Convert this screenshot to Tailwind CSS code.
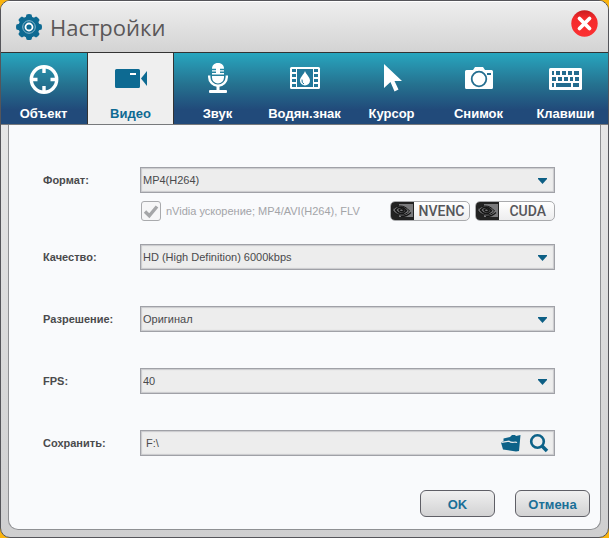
<!DOCTYPE html>
<html lang="ru">
<head>
    <meta charset="UTF-8">
    <meta name="viewport" content="width=device-width, initial-scale=1.0">
    <title>Настройки</title>
    <script src="https://cdn.jsdelivr.net/npm/@tailwindcss/browser@4"></script>
</head>
<body class="bg-[#fbb40c] font-['Liberation_Sans',sans-serif]">
    <div class="flex min-h-screen flex-col overflow-hidden rounded-[10px] border border-[#55555a] bg-linear-to-b from-[#ededed] to-[#cfcfd0]">
        <!-- Header -->
        <header class="flex h-[51px] items-center bg-linear-to-b from-[#efefef] to-[#d3d3d3] pr-[10px] pl-[15px] shadow-[inset_0_1px_0_#fff]">
            <svg class="size-[26px]" viewBox="0 0 26 26">
                <g fill="#0d6a92">
                    <circle cx="13" cy="13" r="10.500"/>
                    <path id="teeth" d="M9.500 4l1-3.500q2.500-1 5 0l1 3.500v18l-1 3.500q-2.500 1-5 0l-1-3.500z"/>
                    <use href="#teeth" transform="rotate(45 13 13)"/>
                    <use href="#teeth" transform="rotate(90 13 13)"/>
                    <use href="#teeth" transform="rotate(135 13 13)"/>
                </g>
                <circle cx="13" cy="13" r="6.300" fill="none" stroke="#8dbbd0" stroke-width="1"/>
                <circle cx="13" cy="13" r="3.500" fill="none" stroke="#fff" stroke-width="1.800"/>
            </svg>
            <h1 class="ml-2 flex-1 font-['Open_Sans',sans-serif] text-[22px] leading-7 text-[#5a5758]">Настройки</h1>
            <button type="button" aria-label="Закрыть" class="mb-[7px] size-[27px]">
                <svg viewBox="0 0 27 27">
                    <defs>
                        <linearGradient id="red" x1="0" y1="0" x2="0" y2="1">
                            <stop offset="0" stop-color="#c81d20"/>
                            <stop offset=".3" stop-color="#f42a2c"/>
                            <stop offset="1" stop-color="#fb3032"/>
                        </linearGradient>
                    </defs>
                    <circle cx="13.5" cy="13.5" r="13.2" fill="url(#red)"/>
                    <path d="M8.500 8.500l10 10M18.500 8.500l-10 10" stroke="#fff" stroke-width="3.800" stroke-linecap="round"/>
                </svg>
            </button>
        </header>

        <!-- Tabs -->
        <nav class="-mx-px grid h-[73px] grid-cols-7 border-t border-b border-t-[#333] border-b-[#77797c] bg-linear-to-b from-[#27a6bf] via-[#25718f] via-45% to-[#214a7a] to-80% text-[13px] leading-4 font-bold text-white">
            <button type="button" class="flex flex-col items-center justify-between pt-2.5 pb-[2px]">
                <svg class="size-8" viewBox="0 0 32 32">
                    <circle cx="16" cy="16.500" r="12.700" fill="none" stroke="#fff" stroke-width="3.400"/>
                    <path d="M16 3v7M16 23v7M2.500 16.500h7M22.500 16.500h7" stroke="#fff" stroke-width="3.400"/>
                </svg>
                Объект
            </button>
            <button type="button" aria-current="page" class="flex flex-col items-center justify-between border-x border-[#333] bg-[#efefef] pt-2.5 pb-[2px] text-[#0e6a93]">
                <svg class="size-8" viewBox="0 0 32 32" fill="#0d6a92">
                    <path d="M1.500 6h22a1.500 1.500 0 0 1 1.500 1.500v16a1.500 1.500 0 0 1-1.500 1.500h-22A1.500 1.500 0 0 1 0 23.500v-16A1.500 1.500 0 0 1 1.500 6z"/>
                    <path d="M26 15.500L32 8v15z"/>
                    <path d="M15 10h6v2h-6z" fill="#fff"/>
                </svg>
                Видео
            </button>
            <button type="button" class="flex flex-col items-center justify-between pt-2.5 pb-[2px]">
                <svg class="size-8" viewBox="0 0 32 32" fill="#fff">
                    <path d="M16 0c-4 0-6 2.500-6 5.800h4v1.400h-4v1.400h4V10h-4v1.400h12V10h-4V8.600h4V7.200h-4V5.800h4C22 2.500 20 0 16 0zM10 13h12v1.500a6 6 0 0 1-12 0z"/>
                    <path d="M7.200 12.500V14a8.800 8.800 0 0 0 17.600 0v-1.500" fill="none" stroke="#fff" stroke-width="2.400"/>
                    <path d="M14.500 23h3v4h-3z"/>
                    <rect x="7" y="27" width="18" height="3" rx="1"/>
                </svg>
                Звук
            </button>
            <button type="button" class="flex flex-col items-center justify-between pt-2.5 pb-[2px]">
                <svg class="size-8" viewBox="0 0 32 32">
                    <rect x="1" y="4" width="30" height="22" rx="1.500" fill="#fff"/>
                    <g fill="#23789a">
                        <path d="M8 6h16v18H8z"/>
                        <path d="M3 6h4v3H3zM3 11h4v3H3zM3 16h4v3H3zM3 21h4v3H3zM25 6h4v3h-4zM25 11h4v3h-4zM25 16h4v3h-4zM25 21h4v3h-4z"/>
                    </g>
                    <path d="M16 8c1 3.500 5 6 5 9.500a5 5 0 0 1-10 0C11 14 15 11.500 16 8z" fill="#fff"/>
                    <path d="M13 16.500q-.5 3.500 2 4.500" fill="none" stroke="#23789a"/>
                </svg>
                Водян.знак
            </button>
            <button type="button" class="flex flex-col items-center justify-between pt-2.5 pb-[2px]">
                <svg class="size-8" viewBox="0 0 32 32" fill="#fff">
                    <path d="M8 1l18 17h-7.500l4 8.500-4 2-4-9.500L8 25z"/>
                </svg>
                Курсор
            </button>
            <button type="button" class="flex flex-col items-center justify-between pt-2.5 pb-[2px]">
                <svg class="size-8" viewBox="0 0 32 32">
                    <path d="M3.500 7H10l2-3h8l2 3h6.500A1.500 1.500 0 0 1 30 8.500v16a1.500 1.500 0 0 1-1.500 1.500h-25A1.500 1.500 0 0 1 2 24.500v-16A1.500 1.500 0 0 1 3.500 7z" fill="#fff"/>
                    <circle cx="16" cy="16" r="7.300" fill="none" stroke="#256f91" stroke-width="1.800"/>
                    <path d="M24 10h4v2h-4z" fill="#256f91"/>
                </svg>
                Снимок
            </button>
            <button type="button" class="flex flex-col items-center justify-between pt-2.5 pb-[2px]">
                <svg class="h-8 w-[33px]" viewBox="0 0 33 32">
                    <rect x="0" y="5" width="33" height="22" rx="1.500" fill="#fff"/>
                    <path fill="#236c8f" d="M3 8h2v4H3zM7 8h4v4H7zM13 8h4v4h-4zM19 8h4v4h-4zM25 8h5v4h-5zM3 14h4v4H3zM9 14h4v4H9zM15 14h4v4h-4zM21 14h3v4h-3zM26 14h4v4h-4zM3 20h2v4H3zM7 20h15v4H7zM24 20h6v4h-6z"/>
                </svg>
                Клавиши
            </button>
        </nav>

        <!-- Settings form -->
        <form class="mx-[7px] mb-[7px] flex flex-1 flex-col rounded-b-[10px] border border-t-0 border-[#8f9093] bg-[#f9fafc] text-[11px] text-[#4a4a4c]">
            <div class="pt-[42px] pr-[45px] pl-[34px]">
                <div class="flex items-center">
                    <label for="format" class="w-[97px] font-bold">Формат:</label>
                    <div class="relative flex-1">
                        <select id="format" class="block h-[26px] w-full appearance-none border border-[#a0a1a7] bg-[#ededed] pl-0.5 shadow-[inset_0_0_1px_1px_#c9c9cc]">
                            <option>MP4(H264)</option>
                        </select>
                        <svg class="pointer-events-none absolute top-[11px] right-2 h-[6px] w-[9px]" viewBox="0 0 9 6"><path d="M0 0h9v1L4.500 6 0 1z" fill="#0d5f85"/></svg>
                    </div>
                </div>

                <div class="mt-2 mb-[23px] ml-[97px] flex items-center text-[#a3a4a8]">
                    <label class="flex flex-1 items-center gap-[5px] pl-px">
                        <span class="grid size-5">
                            <input type="checkbox" checked disabled class="col-start-1 row-start-1 appearance-none rounded-[3px] border border-[#a9aaad] bg-[#f6f6f7]">
                            <svg class="pointer-events-none col-start-1 row-start-1" viewBox="0 0 20 20"><path d="M4 10.500l4.300 4.300L16 5.500" fill="none" stroke="#a5a6a8" stroke-width="3.400"/></svg>
                        </span>
                        nVidia ускорение; MP4/AVI(H264), FLV
                    </label>
                    <div class="flex gap-[5px] font-['Roboto',sans-serif] text-sm leading-[18px] font-medium text-[#56565a]">
                        <span class="flex h-5 w-20 overflow-hidden rounded-[5px] border border-[#a9aaad] bg-linear-to-b from-white to-[#ededee]">
                            <svg class="w-[23px] bg-[#222]" viewBox="0 0 23 18">
                                <path id="eyeback" d="M8 2h14v13H8z" fill="#7a7a7c"/>
                                <g id="eye" fill="none">
                                    <path d="M1.500 8C5 3 13 2 18.500 9 14 14.500 5.500 14.500 1.500 8z" fill="#7a7a7c" stroke="#161616"/>
                                    <path d="M4.500 8c3-4 8-3.500 11 .8-3.500 4-8 3.700-11-.8z" stroke="#161616" stroke-width="1.500"/>
                                    <path d="M8 8c1.500-2 4-1.500 5 .6-1.500 1.800-4 1.700-5-.6z" stroke="#161616" stroke-width="1.500"/>
                                    <path d="M10 14.500c4.500 0 7.500-1.500 10-4" stroke="#161616" stroke-width="1.200"/>
                                </g>
                            </svg>
                            <span class="flex-1 text-center">NVENC</span>
                        </span>
                        <span class="flex h-5 w-20 overflow-hidden rounded-[5px] border border-[#a9aaad] bg-linear-to-b from-white to-[#ededee]">
                            <svg class="w-[23px] bg-[#222]" viewBox="0 0 23 18">
                                <use href="#eyeback"/>
                                <use href="#eye"/>
                            </svg>
                            <span class="flex-1 pr-2 text-right">CUDA</span>
                        </span>
                    </div>
                </div>

                <div class="mb-9 flex items-center">
                    <label for="quality" class="w-[97px] font-bold">Качество:</label>
                    <div class="relative flex-1">
                        <select id="quality" class="block h-[26px] w-full appearance-none border border-[#a0a1a7] bg-[#ededed] pl-0.5 shadow-[inset_0_0_1px_1px_#c9c9cc]">
                            <option>HD (High Definition) 6000kbps</option>
                        </select>
                        <svg class="pointer-events-none absolute top-[11px] right-2 h-[6px] w-[9px]" viewBox="0 0 9 6"><path d="M0 0h9v1L4.500 6 0 1z" fill="#0d5f85"/></svg>
                    </div>
                </div>

                <div class="mb-9 flex items-center">
                    <label for="resolution" class="w-[97px] font-bold">Разрешение:</label>
                    <div class="relative flex-1">
                        <select id="resolution" class="block h-[26px] w-full appearance-none border border-[#a0a1a7] bg-[#ededed] pl-0.5 shadow-[inset_0_0_1px_1px_#c9c9cc]">
                            <option>Оригинал</option>
                        </select>
                        <svg class="pointer-events-none absolute top-[11px] right-2 h-[6px] w-[9px]" viewBox="0 0 9 6"><path d="M0 0h9v1L4.500 6 0 1z" fill="#0d5f85"/></svg>
                    </div>
                </div>

                <div class="mb-9 flex items-center">
                    <label for="fps" class="w-[97px] font-bold">FPS:</label>
                    <div class="relative flex-1">
                        <select id="fps" class="block h-[26px] w-full appearance-none border border-[#a0a1a7] bg-[#ededed] pl-0.5 shadow-[inset_0_0_1px_1px_#c9c9cc]">
                            <option>40</option>
                        </select>
                        <svg class="pointer-events-none absolute top-[11px] right-2 h-[6px] w-[9px]" viewBox="0 0 9 6"><path d="M0 0h9v1L4.500 6 0 1z" fill="#0d5f85"/></svg>
                    </div>
                </div>

                <div class="flex items-center">
                    <label for="path" class="w-[97px] font-bold">Сохранить:</label>
                    <div class="flex h-[26px] flex-1 items-center border border-[#a0a1a7] bg-[#ededed] px-[5px] shadow-[inset_0_0_1px_1px_#c9c9cc]">
                        <input id="path" type="text" value="F:\" class="min-w-0 flex-1 outline-none">
                        <button type="button" aria-label="Открыть папку">
                            <svg class="h-[18px] w-5" viewBox="0 0 20 18" fill="#0d6288">
                                <path d="M2.500 7V4.500L9 3l2-2h3l1 1 4.500-1L18 17l-3 .5L2 15.500 0 8.500z"/>
                                <path d="M.5 8.300L8 7.200c3 2.500 6.500 0 8 1.500" fill="none" stroke="#ededed" stroke-width="1.200"/>
                            </svg>
                        </button>
                        <button type="button" aria-label="Найти" class="ml-2">
                            <svg class="size-5" viewBox="0 0 20 20" fill="none" stroke="#0d6288">
                                <circle cx="8.500" cy="8.500" r="6.300" stroke-width="2.600"/>
                                <path d="M13 13l5 5" stroke-width="3.600"/>
                            </svg>
                        </button>
                    </div>
                </div>
            </div>

            <div class="mt-auto flex justify-end gap-5 pr-[10px] pb-3 text-[13px] leading-4 font-bold text-[#1a6f97]">
                <button type="submit" class="h-[27px] w-[75px] rounded-[6px] border border-[#5f5f66] bg-linear-to-b from-[#f0f0f0] to-[#d2d2d3] pt-0.5">OK</button>
                <button type="button" class="h-[27px] w-[75px] rounded-[6px] border border-[#5f5f66] bg-linear-to-b from-[#f0f0f0] to-[#d2d2d3] pt-0.5">Отмена</button>
            </div>
        </form>
    </div>
</body>
</html>
